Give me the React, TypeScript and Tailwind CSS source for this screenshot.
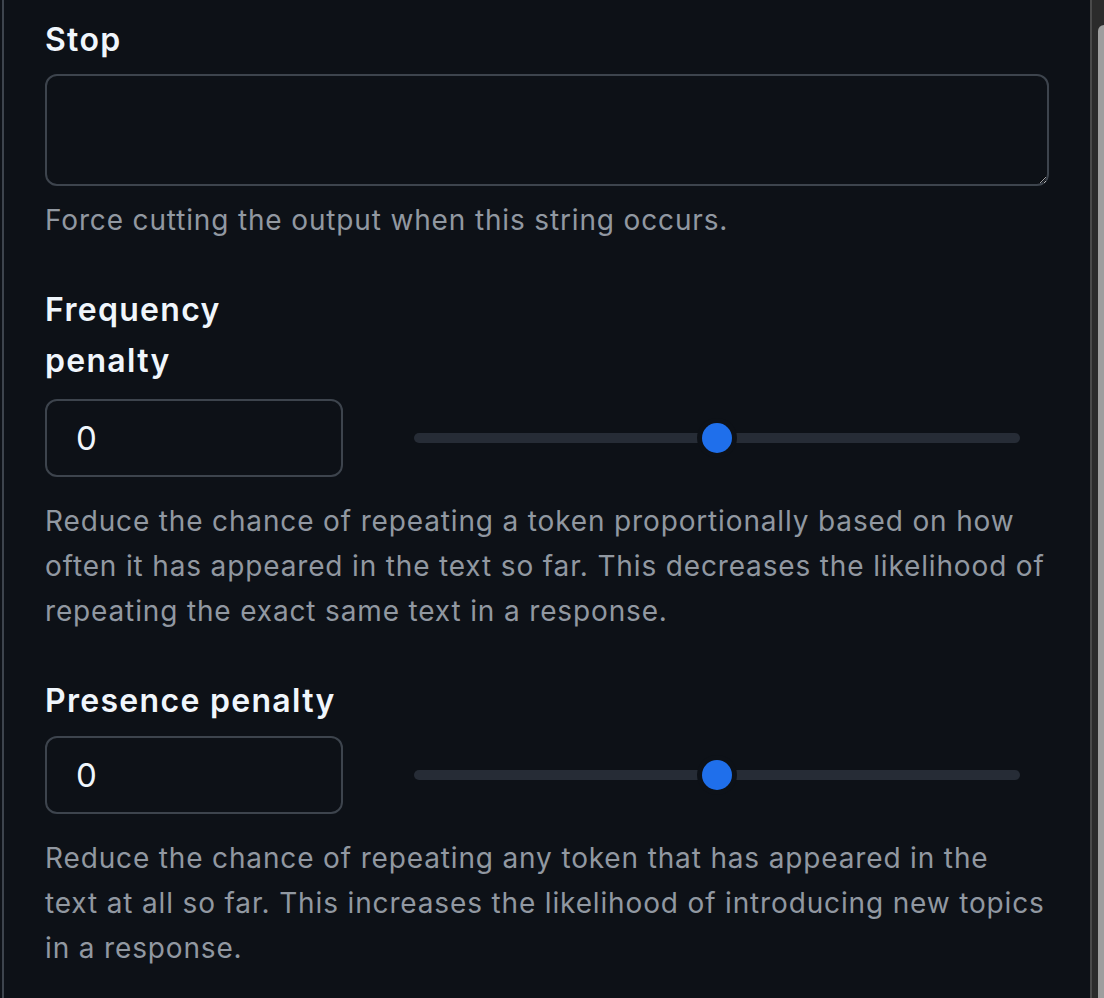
import React from "react";

const font = "font-['Inter','Noto_Sans',sans-serif]";

function Label({ children, className = "" }: { children: React.ReactNode; className?: string }) {
  return (
    <div className={`w-[298px] text-[32px] font-semibold leading-[51px] tracking-[1.3px] text-[#f0f6fc] ${className}`}>
      {children}
    </div>
  );
}

function Hint({ children, className = "" }: { children: React.ReactNode; className?: string }) {
  return (
    <p className={`w-[1001px] text-[28px] leading-[45px] tracking-[0.85px] text-[#9198a1] ${className}`}>{children}</p>
  );
}

function SliderRow({ value }: { value: string }) {
  return (
    <div className="flex items-center">
      <input
        defaultValue={value}
        className="h-[78px] w-[298px] rounded-[12px] border-2 border-[#3d444d] bg-[#0d1117] px-[29px] text-[33px] text-[#f0f6fc] outline-none"
      />
      <div className="relative ml-[71px] mr-[29px] flex h-[30px] flex-1 items-center">
        <div className="h-[10px] w-full rounded-full bg-[#262c36]" />
        <div className="absolute left-1/2 top-0 h-[30px] w-[30px] -translate-x-1/2 rounded-full bg-[#1f6feb] shadow-[0_0_0_5px_#0d1117]" />
      </div>
    </div>
  );
}

export default function App() {
  return (
    <div className={`flex h-[998px] w-full bg-[#0d1117] ${font}`}>
      <div className="w-[2px] bg-[#0d1117]" />
      <div className="w-[2px] bg-[#3d444d]" />
      <div className="flex-1 overflow-hidden pl-[41px] pr-[41px] pt-[14px]">
        <div className="w-[1004px]">
          <Label>Stop</Label>
          <textarea className="mt-[9px] block h-[112px] w-full resize-y rounded-[12px] border-2 border-[#3d444d] bg-[#0d1117] [color-scheme:dark] outline-none" />
          <Hint className="mt-[12px]">Force cutting the output when this string occurs.</Hint>

          <Label className="mt-[41px]">Frequency penalty</Label>
          <div className="mt-[13px]">
            <SliderRow value="0" />
          </div>
          <Hint className="mt-[22px]">
            Reduce the chance of repeating a token proportionally based on how often it has appeared in the text so far.
            This decreases the likelihood of repeating the exact same text in a response.
          </Hint>

          <Label className="mt-[41px]">Presence penalty</Label>
          <div className="mt-[10px]">
            <SliderRow value="0" />
          </div>
          <Hint className="mt-[22px]">
            Reduce the chance of repeating any token that has appeared in the text at all so far. This increases the
            likelihood of introducing new topics in a response.
          </Hint>
        </div>
      </div>
      <div className="w-[2px] bg-[#4a4a4a]" />
      <div className="w-[6px] bg-[#2b2b2b]" />
      <div className="flex w-[6px] flex-col bg-[#2b2b2b] pt-[25px]">
        <div className="flex-1 rounded-tl-[6px] bg-[#9e9e9e]" />
      </div>
    </div>
  );
}
